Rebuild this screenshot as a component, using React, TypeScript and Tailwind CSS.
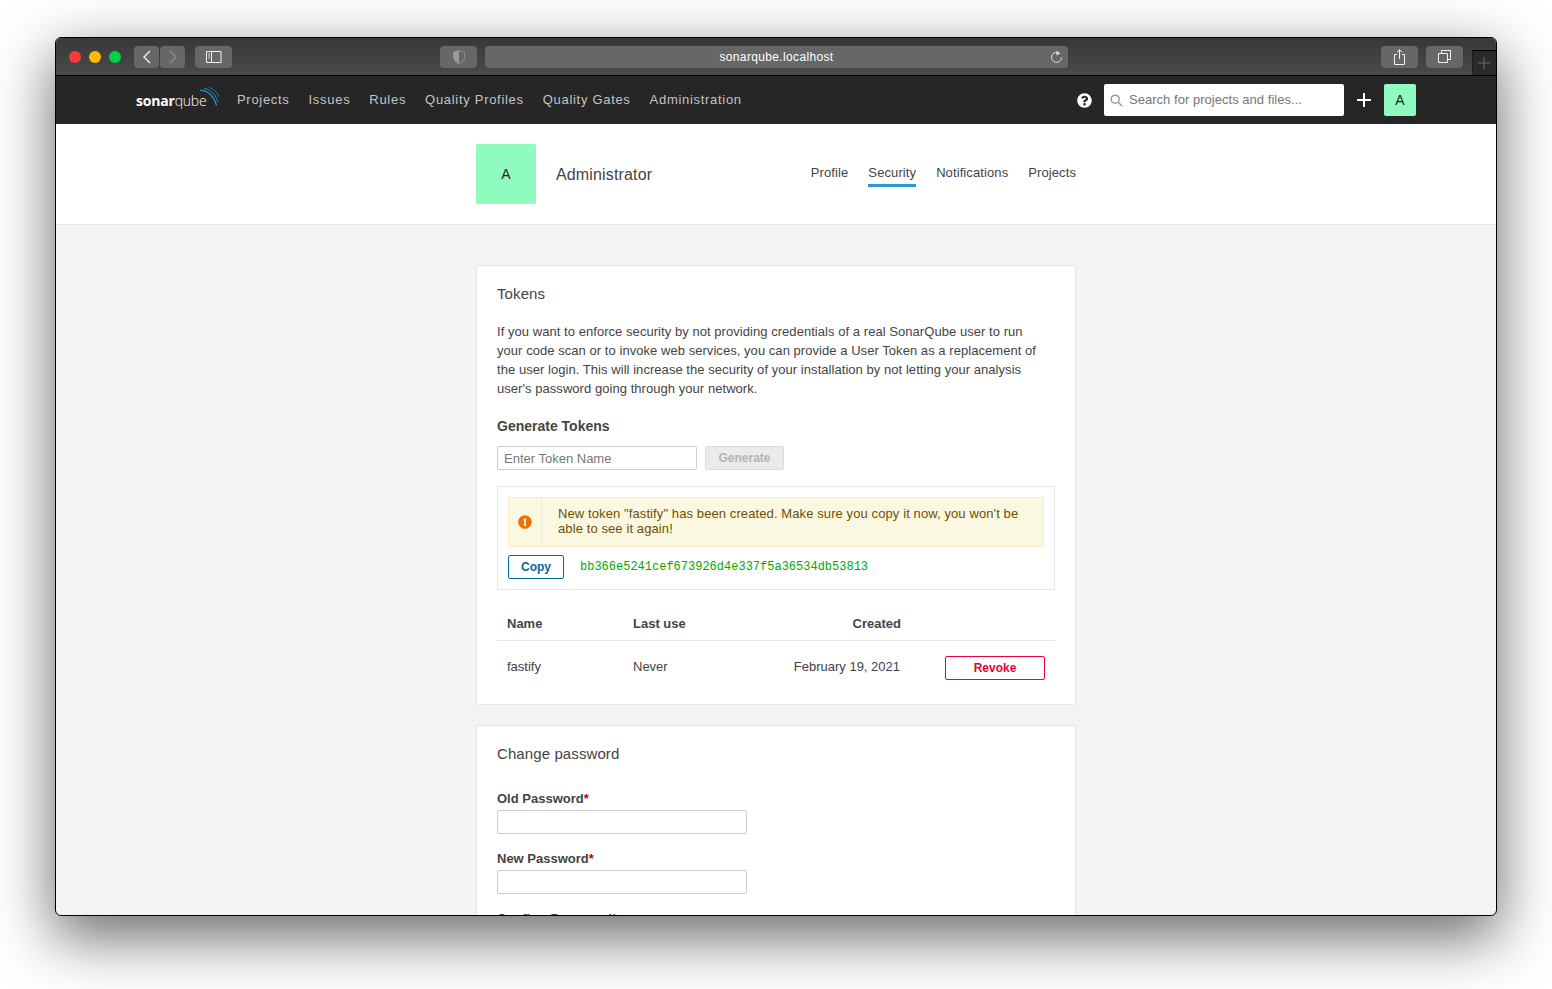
import React from 'react';
import { FaExclamationCircle, FaQuestionCircle } from 'react-icons/fa';

const navLinks = ['Projects', 'Issues', 'Rules', 'Quality Profiles', 'Quality Gates', 'Administration'];

const Toolbar: React.FC<{ className?: string; children?: React.ReactNode }> = ({ className = '', children }) => (
    <div className={`flex h-[22px] items-center justify-center rounded-[4px] bg-[#676767] ${className}`}>{children}</div>
);

const TitleBar = () => (
    <div className="flex h-[38px] shrink-0 items-center border-b border-black bg-gradient-to-b from-[#383838] to-[#4a4a4a] pl-[13px]">
        <span className="h-3 w-3 rounded-full bg-[#fc3a3a]" />
        <span className="ml-2 h-3 w-3 rounded-full bg-[#fdbc00]" />
        <span className="ml-2 h-3 w-3 rounded-full bg-[#00d244]" />
        <Toolbar className="ml-[13px] w-[25px]">
            <svg width="10" height="14" viewBox="0 0 10 14" fill="none" stroke="#f2f2f2" strokeWidth="1.4">
                <path d="M8 1 2 7l6 6" />
            </svg>
        </Toolbar>
        <Toolbar className="ml-px w-[25px] bg-[#5a5a5a]">
            <svg width="10" height="14" viewBox="0 0 10 14" fill="none" stroke="#8c8c8c" strokeWidth="1.4">
                <path d="m2 1 6 6-6 6" />
            </svg>
        </Toolbar>
        <Toolbar className="ml-[10px] w-[37px]">
            <svg width="16" height="12" viewBox="0 0 16 12" fill="none" stroke="#f2f2f2">
                <path d="M.5.5h14.500v11H.5zM5.500.5v11" />
                <path d="M2 3h2M2 5h2M2 7h2" strokeWidth=".8" />
            </svg>
        </Toolbar>
        <Toolbar className="ml-[208px] w-[37px]">
            <svg width="12" height="14" viewBox="0 0 12 14">
                <path d="M6 .5 11.500 2v5c0 3-2.500 5.200-5.500 6.500C3 12.200.5 10 .5 7V2z" fill="none" stroke="#8e8e8e" />
                <path d="M6 .5 .5 2v5c0 3 2.500 5.200 5.500 6.500z" fill="#9a9a9a" />
            </svg>
        </Toolbar>
        <Toolbar className="relative ml-2 w-[583px] bg-[#6e6e6e] text-[12px] tracking-[0.35px] text-white">
            sonarqube.localhost
            <svg className="absolute right-[5px] top-[4px]" width="13" height="14" viewBox="0 0 13 14" fill="none" stroke="#e0e0e0" strokeWidth="1">
                <path d="M9.800 3.600A5 5 0 1 0 11.500 7.500" />
                <path d="M6.500 .5 10 3.500 6.500 5.500z" fill="#e0e0e0" stroke="none" />
            </svg>
        </Toolbar>
        <Toolbar className="ml-[313px] w-[37px]">
            <svg width="13" height="16" viewBox="0 0 13 16" fill="none" stroke="#f2f2f2">
                <path d="M4 5.500H1.500v10h10v-10H9M6.500 10V1M4 3.200 6.500 .8 9 3.200" />
            </svg>
        </Toolbar>
        <Toolbar className="ml-2 w-[37px]">
            <svg width="13" height="13" viewBox="0 0 13 13" fill="none" stroke="#f2f2f2">
                <path d="M.5 3.500h9v9h-9zM3.500 3.500v-3h9v9h-3" />
            </svg>
        </Toolbar>
        <div className="ml-[9px] flex h-[25px] w-6 items-center justify-center self-end border-l border-t border-l-[#1c1c1c] border-t-black bg-[#2a2a2a] pr-[2px]">
            <svg width="12" height="12" viewBox="0 0 12 12" stroke="#6f6f6f">
                <path d="M6 0v12M0 6h12" />
            </svg>
        </div>
    </div>
);

const Logo = () => (
    <div className="relative flex h-8 w-[101px] items-center font-['Open_Sans',sans-serif] text-[14px] text-white">
        <span className="font-bold tracking-[-0.2px]">sonar</span>
        <span className="font-light tracking-[-0.2px]">qube</span>
        <svg className="absolute left-[63px] top-[3px]" width="21" height="20" viewBox="0 0 21 20" fill="none" stroke="#2a8fc4">
            <path d="M1 3.500C8 3 15 9 17.500 18.500" strokeWidth="1.300" />
            <path d="M5 1.500C11 2 17 8 19 15" strokeWidth="1" />
            <path d="M10 .5C14 1.500 18.500 5 20 10" strokeWidth=".8" />
        </svg>
    </div>
);

const NavBar = () => (
    <div className="flex h-12 shrink-0 items-center bg-[#262626] px-20">
        <Logo />
        <div className="flex gap-[19px] text-[13px] tracking-[0.7px] text-[#c4c4c4]">
            {navLinks.map((link) => (
                <span key={link}>{link}</span>
            ))}
        </div>
        <FaQuestionCircle className="ml-auto text-[15px] text-white" />
        <div className="ml-[12.5px] flex h-8 w-60 items-center rounded-[2px] bg-white pl-[6px] text-[13px] text-[#777]">
            <svg width="13" height="13" viewBox="0 0 13 13" fill="none" stroke="#999" strokeWidth="1.500">
                <circle cx="5.200" cy="5.200" r="4" />
                <path d="m8.200 8.200 4 4" />
            </svg>
            <span className="ml-[6px] tracking-[0.03px]">Search for projects and files...</span>
        </div>
        <svg className="ml-[13px]" width="14" height="14" viewBox="0 0 14 14" stroke="#fff" strokeWidth="2">
            <path d="M7 0v14M0 7h14" />
        </svg>
        <div className="ml-[13px] flex h-8 w-8 items-center justify-center rounded-[2px] bg-[#90fbbf] text-[14px] text-[#222]">A</div>
    </div>
);

const tabs = ['Profile', 'Security', 'Notifications', 'Projects'];

const AccountHeader = () => (
    <div className="flex h-[101px] shrink-0 justify-center border-b border-[#e6e6e6] bg-white pt-5">
        <div className="flex h-[60px] w-[600px] items-center">
            <div className="flex h-[60px] w-[60px] items-center justify-center rounded-[2px] bg-[#90fbbf] text-[14px] text-[#222]">A</div>
            <span className="ml-5 mt-[2px] text-[16px] tracking-[0.15px] text-[#444]">Administrator</span>
            <div className="ml-auto flex gap-5 self-start pt-[21px] text-[13px] tracking-[0.1px] text-[#444]">
                {tabs.map((tab) => (
                    <span key={tab} className={`h-[22px] border-b-[3px] leading-[15px] ${tab === 'Security' ? 'border-[#2a9ad6]' : 'border-transparent'}`}>
                        {tab}
                    </span>
                ))}
            </div>
        </div>
    </div>
);

const TokensBox = () => (
    <div className="w-[600px] shrink-0 rounded-[2px] border border-[#e6e6e6] bg-white px-5 pt-5 pb-[14px]">
        <h2 className="text-[15px] leading-[16px] tracking-[0.1px] text-[#444]">Tokens</h2>
        <p className="mt-[20px] w-[545px] text-[13px] leading-[19px] tracking-[0.05px] text-[#444]">
            If you want to enforce security by not providing credentials of a real SonarQube user to run your code scan or to invoke web services, you can provide a User Token as a replacement of the user login. This will increase the security of your installation by not letting your analysis user's password going through your network.
        </p>
        <h3 className="mt-[19px] text-[14px] font-bold leading-[18px] text-[#444]">Generate Tokens</h3>
        <div className="mt-[11px] flex gap-2">
            <input
                placeholder="Enter Token Name"
                className="h-6 w-[200px] rounded-[2px] border border-[#cdcdcd] px-[6px] text-[13px] outline-none placeholder:text-[#777]"
            />
            <button type="button" className="h-6 w-[79px] rounded-[2px] border border-[#dcdcdc] bg-[#ebebeb] text-[12px] font-bold text-[#b4b4b4]">
                Generate
            </button>
        </div>
        <div className="mt-4 h-[104px] w-[558px] border border-[#e6e6e6] p-[10px]">
            <div className="flex h-[50px] items-stretch rounded-[2px] border border-[#f8ebc8] bg-[#fbf8e1] text-[13px] leading-[15px] tracking-[0.1px] text-[#6f4f00]">
                <div className="flex w-[33px] shrink-0 items-center justify-center border-r border-[#f8ebc8]">
                    <FaExclamationCircle className="text-[14px] text-[#ef7100]" />
                </div>
                <div className="flex items-center pb-[2px] pl-[16px] pr-5">New token "fastify" has been created. Make sure you copy it now, you won't be able to see it again!</div>
            </div>
            <div className="mt-2 flex items-center">
                <button type="button" className="h-6 w-14 rounded-[2px] border border-[#08689c] text-[12px] font-bold text-[#08689c]">
                    Copy
                </button>
                <code className="ml-4 font-['Liberation_Mono',monospace] text-[12px] leading-[20px] text-[#00aa00]">bb366e5241cef673926d4e337f5a36534db53813</code>
            </div>
        </div>
        <div className="mt-4 w-[558px] text-[13px] text-[#444]">
            <div className="grid h-[35px] grid-cols-[136px_152px_116px_1fr] items-center border-b border-[#e6e6e6] pt-px font-bold">
                <span className="pl-[10px]">Name</span>
                <span>Last use</span>
                <span className="text-right">Created</span>
                <span />
            </div>
            <div className="grid h-[49px] grid-cols-[136px_152px_115px_1fr] items-center pt-[2px]">
                <span className="pl-[10px]">fastify</span>
                <span>Never</span>
                <span className="text-right">February 19, 2021</span>
                <button type="button" className="ml-[45px] mt-[3px] h-6 w-[100px] rounded-[2px] border border-[#e8003c] text-[12px] font-bold text-[#e8003c]">
                    Revoke
                </button>
            </div>
        </div>
    </div>
);

const PasswordField: React.FC<{ label: string }> = ({ label }) => (
    <div className="mb-[17px]">
        <label className="block text-[13px] font-bold leading-[16px] text-[#444]">
            {label}
            <span className="text-[#b30000]">*</span>
        </label>
        <input type="password" className="mt-[3px] block h-6 w-[250px] rounded-[2px] border border-[#cdcdcd] outline-none" />
    </div>
);

const PasswordBox = () => (
    <div className="mt-5 w-[600px] shrink-0 rounded-[2px] border border-[#e6e6e6] bg-white px-5 pt-5">
        <h2 className="text-[15px] leading-[16px] tracking-[0.1px] text-[#444]">Change password</h2>
        <div className="mt-[29px]">
            <PasswordField label="Old Password" />
            <PasswordField label="New Password" />
            <PasswordField label="Confirm Password" />
        </div>
    </div>
);

export default function App() {
    return (
        <div className="h-[989px] w-[1552px] overflow-hidden bg-white pl-[55px] pt-[37px] font-['Liberation_Sans',sans-serif]">
            <div className="flex h-[879px] w-[1442px] flex-col overflow-hidden rounded-[6px] border border-black bg-[#f3f3f3] shadow-[0_20px_60px_2px_rgba(0,0,0,0.58)]">
                <TitleBar />
                <NavBar />
                <AccountHeader />
                <div className="flex min-h-0 flex-1 flex-col items-center overflow-hidden pt-10">
                    <TokensBox />
                    <PasswordBox />
                </div>
            </div>
        </div>
    );
}
